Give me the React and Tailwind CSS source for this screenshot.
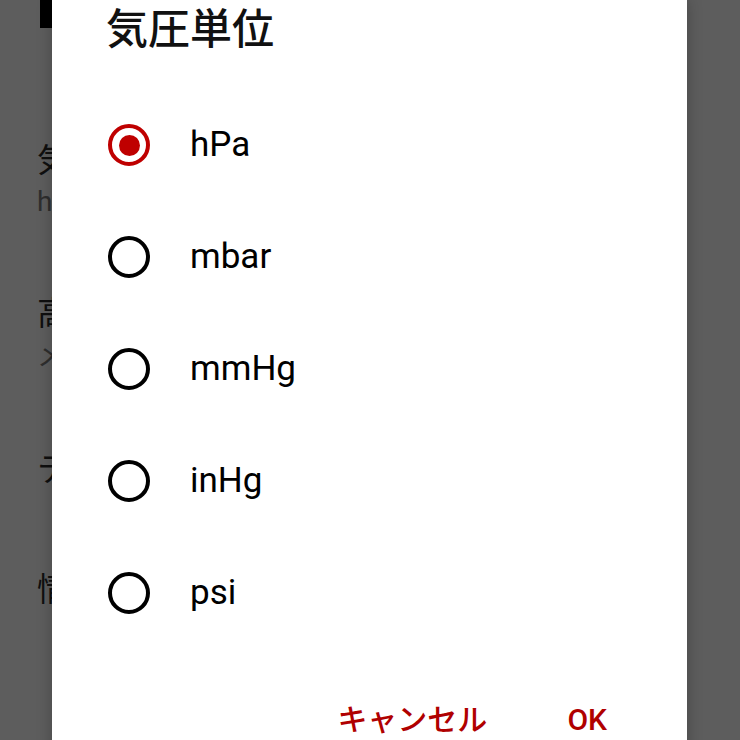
import { useState } from "react";

const FONT = { fontFamily: "Roboto, 'Noto Sans CJK JP', sans-serif" };

const units = ["hPa", "mbar", "mmHg", "inHg", "psi"];

function Radio({ checked }) {
  return (
    <span
      className={
        "flex items-center justify-center w-[42px] h-[42px] rounded-full border-[4px] shrink-0 " +
        (checked ? "border-[#bf0000]" : "border-black")
      }
    >
      {checked && <span className="w-[21px] h-[21px] rounded-full bg-[#bf0000]" />}
    </span>
  );
}

export default function App() {
  const [unit, setUnit] = useState("hPa");

  return (
    <div className="relative w-[740px] h-[740px] overflow-hidden bg-[#5d5d5d]" style={FONT}>
      {/* settings list behind the scrim */}
      <div className="flex flex-col pl-[37px]">
        <div className="w-[15px] h-[28px] bg-black ml-[3px]" />
        <div className="mt-[113px] text-[33px] leading-[40px] text-[#0f0f0f] whitespace-nowrap">気圧単位</div>
        <div className="mt-[4px] text-[28px] leading-[34px] text-[#2e2e2e] whitespace-nowrap">hPa</div>
        <div className="mt-[75px] text-[33px] leading-[40px] text-[#0f0f0f] whitespace-nowrap">高度単位</div>
        <div className="mt-[6px] text-[28px] leading-[34px] text-[#2e2e2e] whitespace-nowrap">メートル</div>
        <div className="mt-[76px] text-[33px] leading-[40px] text-[#0f0f0f] whitespace-nowrap">テーマ</div>
        <div className="mt-[80px] text-[33px] leading-[40px] text-[#0f0f0f] whitespace-nowrap">情報</div>
      </div>

      {/* dialog */}
      <div className="absolute left-[52px] top-0 w-[635px] h-[760px] bg-white flex flex-col shadow-[0_0_14px_rgba(0,0,0,0.25)]">
        <h2 className="pl-[54px] pt-[2px] text-[42px] leading-[56px] font-medium text-[#111]">気圧単位</h2>

        <div className="flex flex-col mt-[31px]">
          {units.map((u) => (
            <button
              key={u}
              onClick={() => setUnit(u)}
              className="flex items-center h-[112px] pl-[56px] text-left"
            >
              <Radio checked={unit === u} />
              <span className="ml-[40px] text-[35px] leading-[42px] text-black">{u}</span>
            </button>
          ))}
        </div>

        <div className="flex justify-end items-center mt-[48px] pr-[80px] gap-[80px]">
          <button className="text-[30px] font-medium text-[#b00000]">キャンセル</button>
          <button className="text-[30px] font-medium text-[#b00000]">OK</button>
        </div>
      </div>
    </div>
  );
}
